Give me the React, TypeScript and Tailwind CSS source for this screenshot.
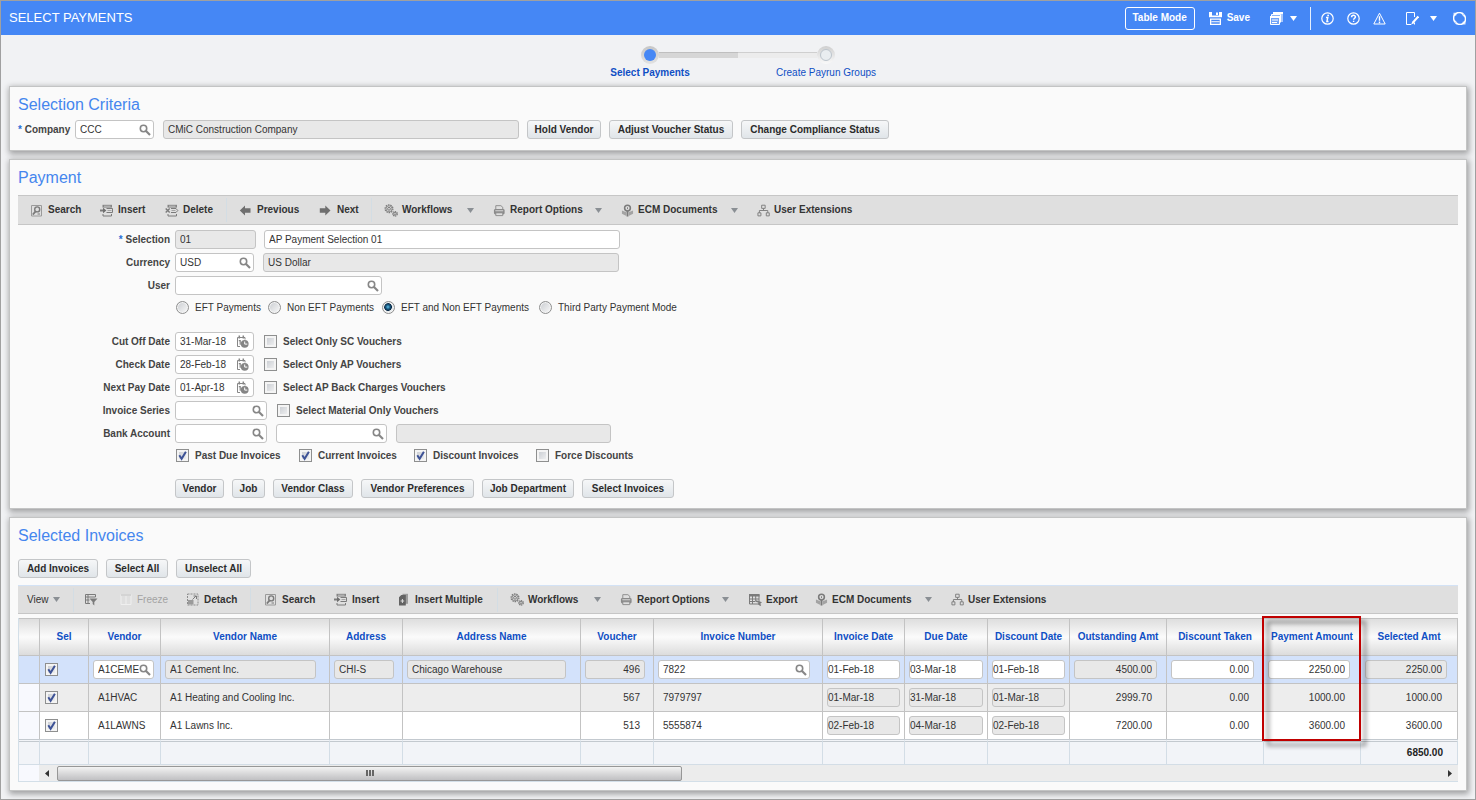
import { useState } from "react";
import type { ReactNode } from "react";
import clsx from "clsx";

/* ---------- icons ---------- */

function Caret({ className }: { className?: string }) {
  return (
    <svg className={clsx("h-[5px] w-[7px] shrink-0", className)} viewBox="0 0 7 5" fill="currentColor">
      <path d="M0 0h7L3.5 5z" />
    </svg>
  );
}

function Glyph({ children, width = "w-[14px]" }: { children: ReactNode; width?: string }) {
  return (
    <svg
      className={clsx("h-[13px] shrink-0", width)}
      viewBox="0 0 14 13"
      fill="none"
      stroke="#7b7b7b"
      strokeWidth="1"
    >
      {children}
    </svg>
  );
}

const MagnifierIcon = () => (
  <svg className="h-3 w-3 shrink-0" viewBox="0 0 12 12" fill="none" stroke="#868686">
    <circle cx="4.5" cy="4.5" r="3.2" strokeWidth="1.6" />
    <path d="M7 7l4 4" strokeWidth="2.2" />
  </svg>
);

const DateIcon = () => (
  <svg className="h-[13px] w-[13px] shrink-0" viewBox="0 0 13 13" fill="none" stroke="#868686">
    <path d="M4 11.5H1.5V2.5h7.5v2" />
    <path d="M3.3 .5v3M7.3 .5v3" strokeWidth="1.5" />
    <path d="M2.8 5.7h1.4v4" strokeWidth="1.2" />
    <circle cx="8.7" cy="8.8" r="3.9" fill="#858585" stroke="none" />
    <path d="M8.7 6.5v2.6h2.6" stroke="#fff" />
  </svg>
);

const SearchIcon = () => (
  <Glyph>
    <path d="M1.5 1.5h10v10.5h-10z" stroke="#9a9a9a" />
    <circle cx="7.2" cy="5.4" r="2.5" strokeWidth="1.4" />
    <path d="M5.6 7.4L2.8 10.6" strokeWidth="1.7" />
    <path d="M7.5 10h2.5" />
  </Glyph>
);

const InsertIcon = () => (
  <Glyph>
    <path d="M2.5 .8h9.5v2.8H2.5z" fill="#858585" stroke="none" />
    <path d="M4 2.2h6.5" stroke="#dfdfdf" strokeWidth=".7" />
    <path d="M3 10v2h8.5v-2" />
    <path d="M0 6.5h4" strokeWidth="2" />
    <path d="M3 3.8L6.4 6.5 3 9.2z" fill="#6f6f6f" stroke="none" />
    <path d="M6.5 4.5h6v4h-6" />
    <path d="M7.5 6.5h4" stroke="#a5a5a5" />
  </Glyph>
);

const DeleteIcon = () => (
  <Glyph>
    <path d="M2.5 .8h9.5v2.8H2.5z" fill="#858585" stroke="none" />
    <path d="M4 2.2h6.5" stroke="#dfdfdf" strokeWidth=".7" />
    <path d="M3 10v2h8.5v-2" />
    <path d="M.7 4.5l4 4M4.7 4.5l-4 4" strokeWidth="1.4" />
    <path d="M6 4.5h5l1.8 2-1.8 2H6" />
    <path d="M6.5 6.5h4" stroke="#a5a5a5" />
  </Glyph>
);

const PrevIcon = () => (
  <Glyph>
    <path d="M.8 6.5L6 1.4V4.2h5.5v4.6H6v2.8z" fill="#6f6f6f" stroke="none" />
  </Glyph>
);

const NextIcon = () => (
  <Glyph>
    <path d="M11.5 6.5L6.3 1.4V4.2H.8v4.6h5.5v2.8z" fill="#6f6f6f" stroke="none" />
  </Glyph>
);

const GearsIcon = () => (
  <Glyph>
    <circle cx="5" cy="4.8" r="3.9" strokeDasharray="1.6 .8" strokeWidth="1.2" />
    <circle cx="5" cy="4.8" r="3" strokeWidth=".8" />
    <circle cx="5" cy="4.8" r="1.4" />
    <circle cx="11" cy="9.8" r="2.3" strokeDasharray="1.3 .6" strokeWidth="1.2" />
    <circle cx="11" cy="9.8" r="1.3" />
  </Glyph>
);

const PrinterIcon = () => (
  <Glyph width="w-[13px]">
    <path d="M3 5V1.3h5.5l2 1.7v2" stroke="#8a8a8a" />
    <rect x="1" y="4.8" width="11.5" height="6" rx="1.6" fill="#8a8a8a" stroke="none" />
    <path d="M2.5 6.8h8.5" stroke="#dfdfdf" />
    <path d="M3 9h7.5v3H3z" fill="#dfdfdf" stroke="#8a8a8a" />
  </Glyph>
);

const EcmIcon = () => (
  <Glyph width="w-[13px]">
    <circle cx="7" cy="3.9" r="3.1" strokeWidth="1.7" />
    <path d="M7 6.5V13" strokeWidth="2" />
    <path d="M1 6.5l4.8 2v4L1 10z" fill="#a3a3a3" stroke="none" />
    <path d="M13 6.5l-4.8 2v4L13 10z" fill="#a3a3a3" stroke="none" />
    <path d="M7 3v2" />
  </Glyph>
);

const TreeIcon = () => (
  <Glyph width="w-[13px]">
    <path d="M5 .8h3.8v3.4H5zM1 9h3.2v3.3H1zM10 9h3.2v3.3H10z" />
    <path d="M7 4.2v2.3M2.6 9V6.5h9V9" />
  </Glyph>
);

const QueryIcon = () => (
  <Glyph>
    <path d="M11.5 4V1.5h-10v9H6M1.5 4h10M4 1.5v9M1.5 7h4" />
    <path d="M5.5 5.5h8L10.3 9v3.6L8.7 11V9z" fill="#7b7b7b" stroke="none" />
  </Glyph>
);

const FreezeIcon = () => (
  <Glyph>
    <path d="M2 1.5h10v10H2zM7 1.5v10" stroke="#efefef" />
    <path d="M2 1h10v2H2z" fill="#d4d4d4" stroke="none" />
  </Glyph>
);

const DetachIcon = () => (
  <Glyph>
    <path d="M1.5 1h10.5v11H1.5z" strokeDasharray="2 1" stroke="#8c8c8c" />
    <path d="M2 7h5.5v4.5H2z" fill="#9a9a9a" stroke="none" />
    <path d="M6.5 6.5l3.5-3.5M7.5 3h3v3" />
  </Glyph>
);

const InsertMultipleIcon = () => (
  <Glyph>
    <path d="M5.5 .8h5.5v10H5.5z" fill="#9d9d9d" stroke="none" />
    <path d="M2 4.2L4.3 2h4.5v10.5H2z" fill="#636363" stroke="none" />
    <path d="M5.4 6v4M3.6 8h3.6" stroke="#dedede" />
  </Glyph>
);

const ExportIcon = () => (
  <Glyph>
    <path d="M1.5 1.5h9.5v9.5H1.5zM1.5 6h9.5M1.5 8.5h6M4.5 3v8M7.7 3v5" />
    <path d="M1 1h10.5v2.5H1z" fill="#7b7b7b" stroke="none" />
    <path d="M8 8l4.5 1.5L11 11l1.8 1.5" strokeWidth="1.6" />
  </Glyph>
);

/* ---------- controls ---------- */

function PushButton({ children, width, onClick }: { children: ReactNode; width: string; onClick?: () => void }) {
  return (
    <button
      type="button"
      onClick={onClick}
      className={clsx(
        "h-[19px] shrink-0 whitespace-nowrap rounded-[3px] border border-[#c4c6c8] bg-linear-to-b from-[#f6f7f8] to-[#e0e5e9] font-bold leading-[17px] text-[#2b2b2b]",
        width
      )}
    >
      {children}
    </button>
  );
}

type FieldProps = {
  id?: string;
  label?: string;
  value?: string;
  width: string;
  readOnly?: boolean;
  icon?: "lookup" | "date";
  align?: "right";
  flush?: boolean;
};

function Field({ id, label, value = "", width, readOnly, icon, align, flush }: FieldProps) {
  return (
    <div
      className={clsx(
        "flex h-[19px] shrink-0 items-center rounded-[3px] border border-[#c4c4c4]",
        readOnly ? "bg-[#e8e8e8]" : "bg-white",
        width
      )}
    >
      <input
        id={id}
        type="text"
        aria-label={label}
        defaultValue={value}
        readOnly={readOnly}
        className={clsx(
          "h-full w-0 min-w-0 grow bg-transparent text-[#333] outline-none",
          flush ? "pl-0" : "pl-1",
          align === "right" && "pr-1 text-right"
        )}
      />
      {icon && (
        <button
          type="button"
          aria-label={icon === "date" ? "Pick date" : "Look up"}
          className={icon === "date" ? "mr-1" : "mr-[2px]"}
        >
          {icon === "date" ? <DateIcon /> : <MagnifierIcon />}
        </button>
      )}
    </div>
  );
}

type CheckProps = {
  label?: string;
  text?: string;
  checked?: boolean;
  onChange?: (checked: boolean) => void;
  className?: string;
};

function Check({ label, text, checked, onChange, className }: CheckProps) {
  const [own, setOwn] = useState(checked ?? false);
  const on = onChange ? !!checked : own;
  return (
    <label className={clsx("flex shrink-0 items-center gap-[6px] font-bold text-[#444]", className)}>
      <span className="grid h-[13px] w-[13px]">
        <input
          type="checkbox"
          aria-label={label}
          checked={on}
          onChange={(e) => (onChange ? onChange(e.target.checked) : setOwn(e.target.checked))}
          className="col-start-1 row-start-1 h-[13px] w-[13px] appearance-none border border-[#8e8f8f] bg-linear-to-br from-[#c4c8ce] to-[#f6f6f6] shadow-[inset_0_0_0_2px_#f4f4f4]"
        />
        {on && (
          <svg className="pointer-events-none col-start-1 row-start-1 h-[13px] w-[13px]" viewBox="0 0 13 13" fill="none">
            <path d="M3.3 6.2l2.3 3.6L9.9 2.8" stroke="#3d5296" strokeWidth="2" />
          </svg>
        )}
      </span>
      {text}
    </label>
  );
}

function Radio({ text, defaultChecked, className }: { text: string; defaultChecked?: boolean; className?: string }) {
  return (
    <label className={clsx("flex shrink-0 items-center gap-[6px] whitespace-nowrap text-[#333]", className)}>
      <input
        type="radio"
        name="payment-mode"
        defaultChecked={defaultChecked}
        className="h-[13px] w-[13px] shrink-0 appearance-none rounded-full border border-[#8e8f8f] bg-linear-to-br from-[#c9ccd0] to-[#fafafa] shadow-[inset_0_0_0_1px_#f4f4f4] checked:bg-[radial-gradient(circle_at_45%_45%,#5fc0ea_0,#17587f_25%,#0d2c48_42%,#e4e8ea_50%)]"
      />
      {text}
    </label>
  );
}

function Tool({
  icon,
  text,
  menu,
  disabled,
  className,
}: {
  icon: ReactNode;
  text: string;
  menu?: boolean;
  disabled?: boolean;
  className?: string;
}) {
  return (
    <button
      type="button"
      disabled={disabled}
      className={clsx(
        "flex shrink-0 items-center gap-1 whitespace-nowrap",
        disabled ? "text-[#a3a3a3]" : "font-bold text-[#333]",
        className
      )}
    >
      {icon}
      {text}
      {menu && <Caret className="mr-[19px] ml-auto text-[#8a8f94]" />}
    </button>
  );
}

function Panel({ title, className, children }: { title: string; className?: string; children: ReactNode }) {
  return (
    <section
      className={clsx(
        "border border-[#c3c4c4] bg-[#fafafa] px-2 pt-2 shadow-[1px_2px_6px_1px_rgba(0,0,0,0.35)]",
        className
      )}
    >
      <h2 className="text-[16px] leading-5 text-[#4586ee]">{title}</h2>
      {children}
    </section>
  );
}

function FormRow({ id, label, required, children }: { id: string; label: string; required?: boolean; children: ReactNode }) {
  return (
    <div className="flex items-center">
      <label htmlFor={id} className="mr-[5px] w-[152px] shrink-0 text-right font-bold text-[#444]">
        {required && <span className="text-[#2a6fd6]">* </span>}
        {label}
      </label>
      {children}
    </div>
  );
}

/* ---------- page sections ---------- */

function TopBar() {
  return (
    <header className="flex h-[34px] items-center bg-[#4587f5] pr-[9px] pl-2 text-white">
      <h1 className="mr-auto text-[13px]">SELECT PAYMENTS</h1>
      <button type="button" className="h-[23px] w-[70px] rounded-[3px] border border-white font-bold">
        Table Mode
      </button>
      <button type="button" className="ml-[14px] flex items-center gap-[5px] font-bold">
        <svg className="h-[13px] w-[13px]" viewBox="0 0 13 13">
          <path d="M0 0h13v5.3H0zM1 6.5h11V13H1z" fill="#fff" />
          <path d="M3 0h7v3.5H3zM2.3 7.7h8.4v4H2.3z" fill="#4587f5" />
          <path d="M7 .5h2V3H7zM2.3 9.2h8.4v1H2.3z" fill="#fff" />
        </svg>
        Save
      </button>
      <button type="button" aria-label="Forms" className="ml-5 flex items-center gap-[7px]">
        <svg className="h-[13px] w-[13px]" viewBox="0 0 13 13" fill="none" stroke="#fff">
          <path d="M3 0h10v10H3z" fill="#a9c8fb" stroke="none" />
          <path d="M3 0h10v2H3z" fill="#fff" stroke="none" />
          <path d="M1.5 4.5V2.5h9v8" fill="#8cb5f9" />
          <path d="M.5 4.5h9v8h-9z" fill="#6fa2f8" />
          <path d="M0 4h10v2H0z" fill="#fff" stroke="none" />
          <path d="M2 8h6M2 10.5h5" />
        </svg>
        <Caret />
      </button>
      <span className="ml-[13px] h-[23px] border-l border-[#e6effd]" />
      <div className="ml-[10px] flex items-center gap-[13px]">
        <button type="button" aria-label="Information">
          <svg className="h-[13px] w-[13px]" viewBox="0 0 13 13" fill="none" stroke="#fff">
            <circle cx="6.5" cy="6.5" r="5.7" strokeWidth="1.2" />
            <path d="M5 5.5h1.8L5.9 9.5h1.6" strokeWidth="1.4" />
            <circle cx="7.1" cy="3.4" r=".9" fill="#fff" stroke="none" />
          </svg>
        </button>
        <button type="button" aria-label="Help">
          <svg className="h-[13px] w-[13px]" viewBox="0 0 13 13" fill="none" stroke="#fff">
            <circle cx="6.5" cy="6.5" r="5.7" strokeWidth="1.2" />
            <path d="M4.6 5.2C4.6 2.7 8.5 2.7 8.4 5c0 1.2-1.8 1.3-1.8 2.7" strokeWidth="1.5" />
            <path d="M5.9 8.7h1.4V10H5.9z" fill="#fff" stroke="none" />
          </svg>
        </button>
        <button type="button" aria-label="Alerts">
          <svg className="h-[13px] w-[13px]" viewBox="0 0 13 13" fill="none" stroke="#fff">
            <path d="M6.5 1.2L12.2 12H.8z" />
            <path d="M6.5 4.2v4.6M6.5 9.6v1.6" strokeWidth="1.4" />
          </svg>
        </button>
      </div>
      <button type="button" aria-label="Notes" className="ml-5 flex items-center gap-[11px]">
        <svg className="h-[13px] w-[13px]" viewBox="0 0 13 13" fill="none" stroke="#fff">
          <path d="M8.5 5V.5h-8v12h4.5M8.5 10.5v2" />
          <path d="M12.3 4.5L6.5 11" strokeWidth="2" />
          <path d="M6.8 9.5L4.8 12.7l3-1.5z" fill="#fff" stroke="none" />
        </svg>
        <Caret />
      </button>
      <button type="button" aria-label="Refresh" className="ml-4">
        <svg className="h-[13px] w-[13px]" viewBox="0 0 13 13" fill="none" stroke="#fff" strokeWidth="1.5">
          <path d="M2.3 10A5.4 5.4 0 0 1 9.8 2" />
          <path d="M10.8 3A5.4 5.4 0 0 1 3.3 11" />
          <path d="M0 8.5h4.2v4.2L2.5 12zM13 4.5H8.8V.3l1.7.7zM9.5 9.5h3v3h-3zM.5.8h3v3h-3z" fill="#fff" fillOpacity=".75" stroke="none" />
          <circle cx="6.5" cy="6.5" r="4.4" fill="#4587f5" stroke="none" />
        </svg>
      </button>
    </header>
  );
}

function Train() {
  return (
    <nav className="flex h-[51px] justify-center pt-[11px] text-[#0f4fc4]">
      <div className="flex w-[176px] flex-col items-center gap-[2px]">
        <div className="flex w-full items-center">
          <span className="grow basis-0" />
          <span className="flex h-[18px] w-[18px] items-center justify-center rounded-full bg-linear-to-b from-[#c6c6c6] to-[#e2e2e2]">
            <span className="h-3 w-3 rounded-full bg-[#4587f5]" />
          </span>
          <span className="h-[6px] grow basis-0 border-t border-[#bfbfbf] bg-[#d6d6d6]" />
        </div>
        <a href="#select" className="font-bold">
          Select Payments
        </a>
      </div>
      <div className="flex w-[176px] flex-col items-center gap-[2px]">
        <div className="flex w-full items-center">
          <span className="h-[6px] grow basis-0 border-t border-[#cfcfcf] bg-[#ececec]" />
          <span className="flex h-[18px] w-[18px] items-center justify-center rounded-full bg-linear-to-b from-[#cfcfcf] to-[#fafafa]">
            <span className="h-3 w-3 rounded-full border border-[#bcc4cc] bg-[#e9edf0]" />
          </span>
          <span className="grow basis-0" />
        </div>
        <a href="#groups">Create Payrun Groups</a>
      </div>
    </nav>
  );
}

const Divider = () => <span className="-ml-px h-6 w-px shrink-0 bg-[#d3dde4]" />;

function PaymentPanel() {
  return (
    <Panel title="Payment" className="pb-[10px]">
      <div className="mt-[7px] flex h-[30px] items-center border-y border-[#c6c6c6] bg-[#dfdfdf] pl-3">
        <Tool icon={<SearchIcon />} text="Search" className="w-[70px]" />
        <Tool icon={<InsertIcon />} text="Insert" className="w-[65px]" />
        <Tool icon={<DeleteIcon />} text="Delete" className="w-[62px]" />
        <Divider />
        <Tool icon={<PrevIcon />} text="Previous" className="ml-3 w-[80px]" />
        <Tool icon={<NextIcon />} text="Next" className="w-[53px]" />
        <Divider />
        <Tool icon={<GearsIcon />} text="Workflows" menu className="ml-3 w-[109px]" />
        <Tool icon={<PrinterIcon />} text="Report Options" menu className="w-[128px]" />
        <Tool icon={<EcmIcon />} text="ECM Documents" menu className="w-[136px]" />
        <Tool icon={<TreeIcon />} text="User Extensions" />
      </div>

      <div className="mt-[5px] flex flex-col gap-1">
        <FormRow id="selection" label="Selection" required>
          <Field id="selection" value="01" width="w-[81px]" readOnly />
          <span className="w-2" />
          <Field label="Selection name" value="AP Payment Selection 01" width="w-[356px]" />
        </FormRow>
        <FormRow id="currency" label="Currency">
          <Field id="currency" value="USD" width="w-[79px]" icon="lookup" />
          <span className="w-[9px]" />
          <Field label="Currency name" value="US Dollar" width="w-[356px]" readOnly />
        </FormRow>
        <FormRow id="user" label="User">
          <Field id="user" width="w-[207px]" icon="lookup" />
        </FormRow>
      </div>

      <div className="mt-[6px] flex h-[13px] items-center pl-[158px]">
        <Radio text="EFT Payments" className="w-[92px]" />
        <Radio text="Non EFT Payments" className="w-[114px]" />
        <Radio text="EFT and Non EFT Payments" defaultChecked className="w-[157px]" />
        <Radio text="Third Party Payment Mode" />
      </div>

      <div className="mt-[18px] flex flex-col gap-1">
        <FormRow id="cutoff" label="Cut Off Date">
          <Field id="cutoff" value="31-Mar-18" width="w-[79px]" icon="date" />
          <Check text="Select Only SC Vouchers" className="ml-[10px]" />
        </FormRow>
        <FormRow id="check-date" label="Check Date">
          <Field id="check-date" value="28-Feb-18" width="w-[79px]" icon="date" />
          <Check text="Select Only AP Vouchers" className="ml-[10px]" />
        </FormRow>
        <FormRow id="next-pay" label="Next Pay Date">
          <Field id="next-pay" value="01-Apr-18" width="w-[79px]" icon="date" />
          <Check text="Select AP Back Charges Vouchers" className="ml-[10px]" />
        </FormRow>
        <FormRow id="series" label="Invoice Series">
          <Field id="series" width="w-[92px]" icon="lookup" />
          <Check text="Select Material Only Vouchers" className="ml-[10px]" />
        </FormRow>
        <FormRow id="bank" label="Bank Account">
          <Field id="bank" width="w-[92px]" icon="lookup" />
          <span className="w-[9px]" />
          <Field label="Account" width="w-[111px]" icon="lookup" />
          <span className="w-[9px]" />
          <Field label="Account name" width="w-[215px]" readOnly />
        </FormRow>
      </div>

      <div className="mt-[6px] flex h-[13px] items-center pl-[158px]">
        <Check text="Past Due Invoices" checked className="w-[123px]" />
        <Check text="Current Invoices" checked className="w-[115px]" />
        <Check text="Discount Invoices" checked className="w-[122px]" />
        <Check text="Force Discounts" />
      </div>

      <div className="mt-[17px] flex gap-2 pl-[157px]">
        <PushButton width="w-[49px]">Vendor</PushButton>
        <PushButton width="w-[33px]">Job</PushButton>
        <PushButton width="w-[80px]">Vendor Class</PushButton>
        <PushButton width="w-[113px]">Vendor Preferences</PushButton>
        <PushButton width="w-[92px]">Job Department</PushButton>
        <PushButton width="w-[92px]">Select Invoices</PushButton>
      </div>
    </Panel>
  );
}

type Column = {
  key: string;
  title: string;
  col: string;
  box: string;
  right?: boolean;
  date?: boolean;
  lookup?: boolean;
  editable?: boolean;
};

const columns: Column[] = [
  { key: "vendor", title: "Vendor", col: "w-[72px]", box: "w-[61px]", lookup: true, editable: true },
  { key: "vendorName", title: "Vendor Name", col: "w-[169px]", box: "w-[151px]" },
  { key: "address", title: "Address", col: "w-[73px]", box: "w-[60px]" },
  { key: "addressName", title: "Address Name", col: "w-[178px]", box: "w-[159px]" },
  { key: "voucher", title: "Voucher", col: "w-[73px]", box: "w-[60px]", right: true },
  { key: "invoice", title: "Invoice Number", col: "w-[169px]", box: "w-[152px]", lookup: true, editable: true },
  { key: "invoiceDate", title: "Invoice Date", col: "w-[82px]", box: "w-[73px]", date: true, editable: true },
  { key: "dueDate", title: "Due Date", col: "w-[83px]", box: "w-[74px]", date: true, editable: true },
  { key: "discountDate", title: "Discount Date", col: "w-[82px]", box: "w-[73px]", date: true, editable: true },
  { key: "outstanding", title: "Outstanding Amt", col: "w-[97px]", box: "w-[83px]", right: true },
  { key: "discount", title: "Discount Taken", col: "w-[97px]", box: "w-[83px]", right: true, editable: true },
  { key: "payment", title: "Payment Amount", col: "w-[97px]", box: "w-[82px]", right: true, editable: true },
  { key: "selected", title: "Selected Amt", col: "w-auto", box: "w-[82px]", right: true },
];

const invoices: Record<string, string>[] = [
  {
    vendor: "A1CEMENT",
    vendorName: "A1 Cement Inc.",
    address: "CHI-S",
    addressName: "Chicago Warehouse",
    voucher: "496",
    invoice: "7822",
    invoiceDate: "01-Feb-18",
    dueDate: "03-Mar-18",
    discountDate: "01-Feb-18",
    outstanding: "4500.00",
    discount: "0.00",
    payment: "2250.00",
    selected: "2250.00",
  },
  {
    vendor: "A1HVAC",
    vendorName: "A1 Heating and Cooling Inc.",
    voucher: "567",
    invoice: "7979797",
    invoiceDate: "01-Mar-18",
    dueDate: "31-Mar-18",
    discountDate: "01-Mar-18",
    outstanding: "2999.70",
    discount: "0.00",
    payment: "1000.00",
    selected: "1000.00",
  },
  {
    vendor: "A1LAWNS",
    vendorName: "A1 Lawns Inc.",
    voucher: "513",
    invoice: "5555874",
    invoiceDate: "02-Feb-18",
    dueDate: "04-Mar-18",
    discountDate: "02-Feb-18",
    outstanding: "7200.00",
    discount: "0.00",
    payment: "3600.00",
    selected: "3600.00",
  },
];

const rowColors = ["bg-[#d3e2fb]", "bg-[#ededed]", "bg-white"];

function InvoiceCell({ column, value, active }: { column: Column; value?: string; active: boolean }) {
  if (active || column.date) {
    return (
      <Field
        label={column.title}
        value={value}
        width={column.box}
        readOnly={!active || !column.editable}
        icon={active && column.lookup ? "lookup" : undefined}
        align={column.right ? "right" : undefined}
        flush={column.date}
      />
    );
  }
  return (
    <div className={clsx("px-[5px] whitespace-nowrap", column.box, column.right && "text-right")}>{value}</div>
  );
}

function InvoicesPanel() {
  const [picked, setPicked] = useState([true, true, true]);

  const setAll = (on: boolean) => setPicked(invoices.map(() => on));

  return (
    <Panel title="Selected Invoices" className="pb-2">
      <div className="mt-[13px] flex gap-2">
        <PushButton width="w-[80px]">Add Invoices</PushButton>
        <PushButton width="w-[62px]" onClick={() => setAll(true)}>
          Select All
        </PushButton>
        <PushButton width="w-[75px]" onClick={() => setAll(false)}>
          Unselect All
        </PushButton>
      </div>

      <div className="mt-[7px] flex h-[29px] items-center border-t border-b border-t-[#d3e2f5] border-b-[#c6c6c6] bg-[#dfdfdf] pl-[9px]">
        <button type="button" className="flex w-[47px] shrink-0 items-center gap-1 text-[#333]">
          View <Caret className="text-[#8a8f94]" />
        </button>
        <Divider />
        <button type="button" aria-label="Query by example" className="ml-[10px] w-[35px] shrink-0">
          <QueryIcon />
        </button>
        <Tool icon={<FreezeIcon />} text="Freeze" disabled className="w-[67px]" />
        <Tool icon={<DetachIcon />} text="Detach" className="w-[65px]" />
        <Divider />
        <Tool icon={<SearchIcon />} text="Search" className="ml-[13px] w-[70px]" />
        <Tool icon={<InsertIcon />} text="Insert" className="w-[63px]" />
        <Tool icon={<InsertMultipleIcon />} text="Insert Multiple" className="w-[101px]" />
        <Divider />
        <Tool icon={<GearsIcon />} text="Workflows" menu className="ml-3 w-[110px]" />
        <Tool icon={<PrinterIcon />} text="Report Options" menu className="w-[128px]" />
        <Tool icon={<ExportIcon />} text="Export" className="w-[67px]" />
        <Tool icon={<EcmIcon />} text="ECM Documents" menu className="w-[136px]" />
        <Tool icon={<TreeIcon />} text="User Extensions" />
      </div>

      <table className="mt-1 w-full table-fixed border-separate border-spacing-0 border-l border-[#d3dfe8] text-[#333]">
        <colgroup>
          <col className="w-[21px]" />
          <col className="w-[49px]" />
          {columns.map((c) => (
            <col key={c.key} className={c.col} />
          ))}
        </colgroup>
        <thead>
          <tr className="h-[38px] text-[#0f4fc4] *:border-t *:border-r *:border-b *:border-[#c3c3c3] *:bg-linear-to-b *:from-[#dedede] *:via-[#fbfbfb] *:to-[#dcdcdc] *:p-0 *:whitespace-nowrap">
            <th aria-label="Row header" />
            <th>Sel</th>
            {columns.map((c) => (
              <th key={c.key} className={c.key === "payment" ? "relative" : undefined}>
                {c.title}
                {c.key === "payment" && (
                  <span className="pointer-events-none absolute -top-[3px] -right-px -left-[2px] z-10 h-[125px] border-2 border-[#c00000] drop-shadow-[5px_5px_2px_rgba(0,0,0,0.5)]" />
                )}
              </th>
            ))}
          </tr>
        </thead>
        <tbody>
          {invoices.map((row, i) => (
            <tr
              key={row.vendor}
              className={clsx(
                "*:border-r *:border-[#c3c3c3] *:p-0 *:pl-1",
                i < 2 ? "h-[28px] *:border-b" : "h-[27px]",
                rowColors[i]
              )}
            >
              <td className={i === 0 ? undefined : "bg-[#f8f9fe]"} />
              <td>
                <Check
                  label={`Select ${row.vendor}`}
                  checked={picked[i]}
                  onChange={(on) => setPicked(picked.map((p, j) => (j === i ? on : p)))}
                  className="ml-px"
                />
              </td>
              {columns.map((c) => (
                <td key={c.key}>
                  <InvoiceCell column={c} value={row[c.key]} active={i === 0} />
                </td>
              ))}
            </tr>
          ))}
        </tbody>
        <tfoot>
          <tr className="h-[26px] bg-[#f2f4f8] *:border-t-3 *:border-r *:border-b *:border-[#d3dde6] *:border-t-[#c3c9cf] *:p-0 *:[border-top-style:double]">
            <td />
            <td />
            {columns.map((c) => (
              <td key={c.key} className="pr-[14px]! text-right font-bold text-[#222]">
                {c.key === "selected" && "6850.00"}
              </td>
            ))}
          </tr>
        </tfoot>
      </table>

      <div className="flex h-[17px] border-b border-l border-[#d3dfe8] bg-[#f8f9fe] pl-5">
        <div className="flex grow items-center bg-[#ececec] px-[6px] text-[#333]">
          <svg className="mr-2 h-[7px] w-1 shrink-0" viewBox="0 0 4 7" fill="currentColor">
            <path d="M4 0v7L0 3.5z" />
          </svg>
          <span className="flex h-[15px] w-4/9 items-center justify-center gap-px rounded-[2px] border border-[#979797] bg-linear-to-b from-[#f3f3f3] via-[#d9d9da] to-[#c0c0c3]">
            <i className="h-[6px] w-[2px] bg-[#666]" />
            <i className="h-[6px] w-[2px] bg-[#666]" />
            <i className="h-[6px] w-[2px] bg-[#666]" />
          </span>
          <svg className="ml-auto h-[7px] w-1 shrink-0" viewBox="0 0 4 7" fill="currentColor">
            <path d="M0 0v7l4-3.5z" />
          </svg>
        </div>
      </div>
    </Panel>
  );
}

export default function App() {
  return (
    <div className="border border-[#a0a0a0] bg-[#f1f2f4] font-['Liberation_Sans',Arial,sans-serif] text-[10px] leading-[14px]">
      <TopBar />
      <Train />
      <main className="flex flex-col gap-2 px-2 pb-2">
        <Panel title="Selection Criteria" className="pb-[11px]">
          <div className="mt-[5px] flex items-center">
            <label htmlFor="company" className="mr-[5px] w-[52px] shrink-0 font-bold whitespace-nowrap text-[#444]">
              <span className="text-[#2a6fd6]">* </span>Company
            </label>
            <Field id="company" value="CCC" width="w-[79px]" icon="lookup" />
            <span className="w-[9px]" />
            <Field label="Company name" value="CMiC Construction Company" width="w-[356px]" readOnly />
            <div className="ml-2 flex gap-2">
              <PushButton width="w-[74px]">Hold Vendor</PushButton>
              <PushButton width="w-[124px]">Adjust Voucher Status</PushButton>
              <PushButton width="w-[148px]">Change Compliance Status</PushButton>
            </div>
          </div>
        </Panel>
        <PaymentPanel />
        <InvoicesPanel />
      </main>
    </div>
  );
}
